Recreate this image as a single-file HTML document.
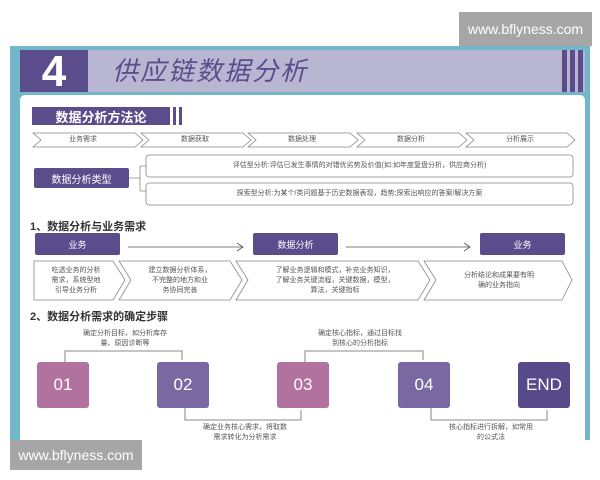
<html><head><style>
*{margin:0;padding:0;box-sizing:border-box}
body{width:600px;height:480px;background:#fff;position:relative;overflow:hidden;font-family:"Liberation Sans","Noto Sans CJK SC",sans-serif;}
.a{position:absolute}
.wm{background:#a6a6a6;color:#fff;font-size:14px;display:flex;align-items:center;justify-content:center}
.pb{background:#5b4d8c;color:#fff;display:flex;align-items:center;justify-content:center;border-radius:2px}
.t{font-size:7px;color:#555;text-align:center;line-height:10px}
.step{color:#fff;font-size:17px;display:flex;align-items:center;justify-content:center;border-radius:3px;width:52px;height:46px;top:362px}
</style></head><body>
<div class="a" style="left:10px;top:46px;width:580px;height:394px;background:#72b6c9"></div>
<div class="a" style="left:20px;top:50px;width:68px;height:42px;background:#5b4d8c;color:#fff;font-size:44px;font-weight:bold;text-align:center;line-height:44px">4</div>
<div class="a" style="left:88px;top:50px;width:497px;height:42px;background:#b9b6d2"></div>
<div class="a" style="left:112px;top:51px;font-size:26px;color:#5b4d8c;letter-spacing:2px;line-height:40px;font-style:italic">供应链数据分析</div>
<div class="a" style="left:562px;top:50px;width:5px;height:42px;background:#5b4d8c"></div>
<div class="a" style="left:570px;top:50px;width:5px;height:42px;background:#5b4d8c"></div>
<div class="a" style="left:578px;top:50px;width:5px;height:42px;background:#5b4d8c"></div>
<div class="a" style="left:20px;top:95px;width:565px;height:345px;background:#fff;border-radius:5px 5px 0 0"></div>
<div class="a pb" style="left:32px;top:107px;width:138px;height:18px;font-size:13px;font-weight:bold;border-radius:0">数据分析方法论</div>
<div class="a" style="left:173px;top:107px;width:3px;height:18px;background:#5b4d8c"></div>
<div class="a" style="left:179px;top:107px;width:3px;height:18px;background:#5b4d8c"></div>
<svg class="a" style="left:0;top:0" width="600" height="480" fill="none" stroke="#888" stroke-width="0.8">
<g>
<path d="M33 133H135L143 140L135 147H33L41 140Z"/>
<path d="M141 133H243L251 140L243 147H141L149 140Z"/>
<path d="M248 133H350L358 140L350 147H248L256 140Z"/>
<path d="M357 133H459L467 140L459 147H357L365 140Z"/>
<path d="M466 133H567L575 140L567 147H466L474 140Z"/>
</g>
<path d="M129 178H140M140 166V191M140 166H146M140 191H146"/>
<rect x="146" y="155" width="427" height="22" rx="3"/>
<rect x="146" y="183" width="427" height="22" rx="3"/>
<path d="M128 247H243M237 243L243 247L237 251M346 247H470M464 243L470 247L464 251" stroke="#555"/>
<path d="M34 261H113L125 280L113 300H34Z"/>
<path d="M119 261H230L242 280L230 300H119L131 280Z"/>
<path d="M236 261H418L430 280L418 300H236L248 280Z"/>
<path d="M424 261H562L572 280L562 300H424L436 280Z"/>
<path d="M65 362V351H182V360" stroke="#666"/>
<path d="M185 408V420H301V410" stroke="#666"/>
<path d="M305 362V351H423V360" stroke="#666"/>
<path d="M431 408V420H547V410" stroke="#666"/>
</svg>
<div class="a t" style="left:33px;top:135px;width:100px">业务需求</div>
<div class="a t" style="left:145px;top:135px;width:100px">数据获取</div>
<div class="a t" style="left:252px;top:135px;width:100px">数据处理</div>
<div class="a t" style="left:361px;top:135px;width:100px">数据分析</div>
<div class="a t" style="left:470px;top:135px;width:100px">分析展示</div>
<div class="a pb" style="left:34px;top:168px;width:95px;height:20px;font-size:10px">数据分析类型</div>
<div class="a t" style="left:146px;top:161px;width:427px">评估型分析:评估已发生事情的对错优劣势及价值(如:如年度复盘分析，供应商分析)</div>
<div class="a t" style="left:146px;top:189px;width:427px">探索型分析:为某个/类问题基于历史数据表现，趋势;探索出响应的答案/解决方案</div>
<div class="a" style="left:30px;top:218px;font-size:11px;font-weight:bold;color:#333">1、数据分析与业务需求</div>
<div class="a pb" style="left:35px;top:233px;width:85px;height:22px;font-size:9px">业务</div>
<div class="a pb" style="left:253px;top:233px;width:85px;height:22px;font-size:9px">数据分析</div>
<div class="a pb" style="left:480px;top:233px;width:85px;height:22px;font-size:9px">业务</div>
<div class="a t" style="left:38px;top:266px;width:76px">吃透业务的分析<br>需求，系统型地<br>引导业务分析</div>
<div class="a t" style="left:130px;top:266px;width:100px">建立数据分析体系，<br>不完整的地方和业<br>务协同完善</div>
<div class="a t" style="left:250px;top:266px;width:170px">了解业务逻辑和模式，补充业务知识，<br>了解业务关键流程，关键数据，模型，<br>算法，关键指标</div>
<div class="a t" style="left:436px;top:271px;width:126px">分析结论和成果要有明<br>确的业务指向</div>
<div class="a" style="left:30px;top:308px;font-size:11px;font-weight:bold;color:#333">2、数据分析需求的确定步骤</div>
<div class="a t" style="left:70px;top:329px;width:110px">确定分析目标，如分析库存<br>量、原因诊断等</div>
<div class="a t" style="left:305px;top:329px;width:110px">确定核心指标，通过目标找<br>到核心的分析指标</div>
<div class="a t" style="left:190px;top:423px;width:110px">确定业务核心需求，将取数<br>需求转化为分析需求</div>
<div class="a t" style="left:436px;top:423px;width:110px">核心指标进行拆解，如常用<br>的公式法</div>
<div class="a step" style="left:37px;background:#b172a0">01</div>
<div class="a step" style="left:157px;background:#7a68a2">02</div>
<div class="a step" style="left:277px;background:#b172a0">03</div>
<div class="a step" style="left:398px;background:#7a68a2">04</div>
<div class="a step" style="left:518px;background:#584a8a">END</div>
<div class="a wm" style="left:459px;top:12px;width:133px;height:34px">www.bflyness.com</div>
<div class="a wm" style="left:10px;top:440px;width:132px;height:30px">www.bflyness.com</div>
</body></html>
